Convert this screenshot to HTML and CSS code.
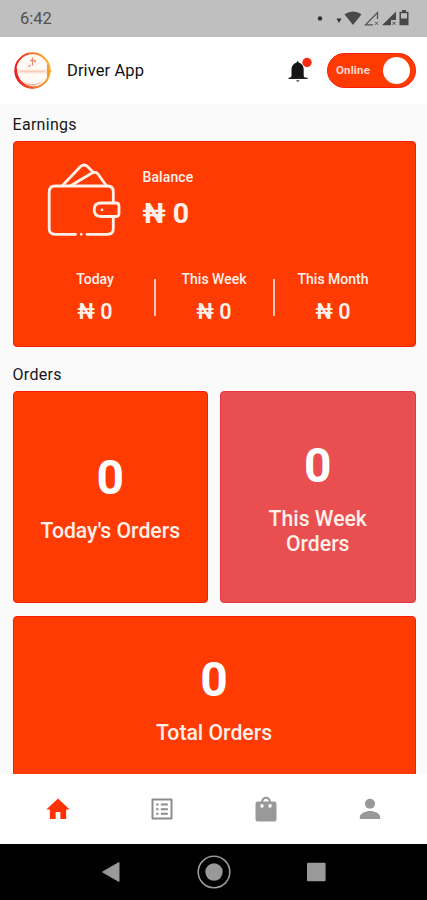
FILE: index.html
```html
<!DOCTYPE html>
<html lang="en">
<head>
<meta charset="utf-8">
<title>Driver App</title>
<link rel="stylesheet" href="styles.css">
</head>
<body>
<div class="status">
  <span class="clock">6:42</span>
  <svg class="status-icons" width="96" height="20" viewBox="0 0 96 20">
    <circle cx="5" cy="9.500" r="2.200" fill="#333"/>
    <path d="M21.500 9.500h5l-2.500 4.500z" fill="#333"/>
    <path d="M29.500 5.200q8.500-5.600 17 0L38 16z" fill="#484848"/>
    <path d="M62.500 10V3.500L50.500 15.800H58" fill="none" stroke="#555" stroke-width="1.300"/>
    <path d="M60 12.800l3 3m0-3l-3 3" stroke="#555" stroke-width="1"/>
    <path d="M81 2.500v8.500h-5v5.300H67z" fill="#484848"/>
    <path d="M77.500 12.800l3 3m0-3l-3 3" stroke="#484848" stroke-width="1"/>
    <path fill-rule="evenodd" d="M87 1h4v1.700h2.500v13.600h-9V2.700H87zM86 4.200v5.300h6V4.200z" fill="#484848"/>
  </svg>
</div>
<header class="header">
  <svg class="logo" width="40" height="40" viewBox="0 0 40 40">
    <defs>
      <linearGradient id="ring" x1="0" y1=".6" x2="1" y2=".4">
        <stop offset="0" stop-color="#e8161c"/><stop offset=".5" stop-color="#f4642c"/><stop offset="1" stop-color="#f9b52c"/>
      </linearGradient>
    </defs>
    <circle cx="20.500" cy="19.500" r="16.500" fill="#fffaf6"/>
    <path d="M5 20.500h31" stroke="#fce3d8" stroke-width="4"/>
    <circle cx="20.500" cy="19.500" r="17.200" fill="none" stroke="url(#ring)" stroke-width="2"/>
    <path d="M3 17c-1 10 5 19 15 20.500 6 .5 11-2 14-5-5 3-10 4-15 2C9 32 5 26 5 17z" fill="url(#ring)"/>
    <path d="M12 30.500c6 4 13 4 19-1.500-5 7-14 7-19 1.500z" fill="#f6a48c"/>
    <path d="M36.500 14l.5 5 3 1-2.500 1.500L36 28l-1 2.500V13z" fill="#f69a2c"/>
    <path d="M20.500 6.500v8M18 9.500h5l.5 2M18.500 14l-2 2" fill="none" stroke="#f08a74" stroke-width="1.300"/>
    <path d="M8 20.500h25" stroke="#f8cbb6" stroke-width="1"/>
  </svg>
  <h1 class="app-name">Driver App</h1>
  <svg class="bell" width="32" height="32" viewBox="0 0 32 32">
    <path d="M7.500 23.500c0-1 2-1 2-2.800v-6c0-4.200 2.400-6.200 5-7 0-2 2.200-2 2.200 0 3 .8 5 2.800 5 7v6c0 1.800 2 1.800 2 2.800z" fill="#151515"/>
    <path d="M6.500 23.300h19" stroke="#222" stroke-width="1.400"/>
    <path d="M14 25.200h3.600q-1.800 3.200-3.600 0z" fill="#444"/>
    <circle cx="25" cy="7.500" r="4.700" fill="#fb2c12"/>
  </svg>
  <div class="toggle"><span>Online</span><i class="knob"></i></div>
</header>
<main class="content">
  <h2 class="section">Earnings</h2>
  <section class="card earnings">
    <div class="balance">
      <svg class="wallet" width="74" height="76" viewBox="0 0 74 76" fill="none" stroke="#fff0ea" stroke-width="2.800" stroke-linecap="round" stroke-linejoin="round">
        <path d="M28.500 72.300H8q-5.800 0-5.800-5.800V30.300q0-6.300 5.800-6.300h52.500q5.800 0 5.800 6v11M66.300 55v11.500q0 5.800-5.800 5.800H40"/>
        <path d="M15.500 23.500L33.500 4.500q4-3 7 0l6 6M24 23.500l21-12.500q4-1.500 6 1l8.500 12"/>
        <path d="M54 41h15q3 0 3 3v7.500q0 3-3 3H54q-6.800 0-6.800-6.700Q47.200 41 54 41z"/>
        <path d="M55 47.800h.01M34.200 72.300h.01"/>
      </svg>
      <div>
        <div class="balance-label">Balance</div>
        <div class="balance-value">₦ 0</div>
      </div>
    </div>
    <div class="periods">
      <div class="period"><div class="label">Today</div><div class="amount">₦ 0</div></div>
      <div class="period"><div class="label">This Week</div><div class="amount">₦ 0</div></div>
      <div class="period"><div class="label">This Month</div><div class="amount">₦ 0</div></div>
    </div>
  </section>
  <h2 class="section orders-title">Orders</h2>
  <div class="orders">
    <section class="card tile"><strong>0</strong><span>Today's Orders</span></section>
    <section class="card tile rose"><strong>0</strong><span>This Week<br>Orders</span></section>
    <section class="card tile total"><strong>0</strong><span>Total Orders</span></section>
  </div>
</main>
<nav class="tabs">
  <svg width="28" height="28" viewBox="0 0 24 24" fill="#fd3206"><path d="M10 20.500v-6h4v6h5v-8h3L12 3 2 12.500h3v8z"/></svg>
  <svg width="28" height="28" viewBox="0 0 24 24" fill="#8c8c8c"><path d="M19.300 4.700v14.600H4.700V4.700h14.600m.8-1.700H3.900c-.5 0-.9.400-.9.900v16.200c0 .4.400.9.900.9h16.200c.4 0 .9-.5.900-.9V3.900c0-.5-.5-.9-.9-.9zM11 7.300h6V9h-6zm0 4h6V13h-6zm0 4h6V17h-6zM7 7.300h2V9H7zm0 4h2V13H7zm0 4h2V17H7z"/></svg>
  <svg width="28" height="28" viewBox="0 0 24 24" fill="#999"><path fill-rule="evenodd" d="M5 5.500h2.700C8.200 3 9.800 1.500 12 1.500S15.800 3 16.300 5.500H19q2 0 2 2V21q0 1.700-1.700 1.700H4.700Q3 22.700 3 21V7.500q0-2 2-2zm4.600 0h4.800C14 4 13.200 3.200 12 3.200S10 4 9.600 5.500zM7.300 8v2.800h2.500V8zm6.900 0v2.800h2.500V8z"/></svg>
  <svg width="28" height="28" viewBox="0 0 24 24" fill="#999"><circle cx="12" cy="7.500" r="4.300"/><path d="M3.300 20.500v-1.800c0-3 5-5 8.700-5s8.700 2 8.700 5v1.800z"/></svg>
</nav>
<footer class="system">
  <svg width="20" height="22" viewBox="0 0 20 22"><path d="M1.500 11L18 1.500v19z" fill="#999" stroke="#999" stroke-linejoin="round"/></svg>
  <svg width="34" height="34" viewBox="0 0 34 34"><circle cx="17" cy="17" r="15.800" fill="none" stroke="#999" stroke-width="1.600"/><circle cx="17" cy="17" r="8.700" fill="#999"/></svg>
  <svg width="20" height="20" viewBox="0 0 20 20"><rect x="0" y=".7" width="18.600" height="18.600" rx="1" fill="#999"/></svg>
</footer>
</body>
</html>
```
FILE: styles.css
```css
* { box-sizing: border-box; }
body {
  margin: 0;
  width: 427px;
  height: 900px;
  overflow: hidden;
  display: flex;
  flex-direction: column;
  background: #fafafa;
  font-family: Roboto, "Liberation Sans", sans-serif;
}
svg { display: block; flex: none; }
h1, h2 { margin: 0; font-weight: 400; }

.status {
  flex: none;
  height: 37px;
  padding: 0 16px 0 20px;
  display: flex;
  align-items: center;
  justify-content: space-between;
  background: #bfbfbf;
  color: #505050;
}
.clock { font-size: 16.5px; }

.header {
  flex: none;
  height: 67px;
  padding: 0 11px 0 13px;
  display: flex;
  align-items: center;
  background: #fff;
}
.app-name { margin-left: 14px; font-size: 16.5px; letter-spacing: 0.1px; color: #111; }
.bell { margin-left: auto; }
.toggle {
  width: 89px;
  height: 35px;
  margin-left: 13px;
  padding: 0 5px 0 8px;
  display: flex;
  align-items: center;
  justify-content: space-between;
  border: 1px solid #fb1e08;
  border-radius: 18px;
  background: #ff3b04;
  color: #ffd9ce;
  font-size: 11.5px;
  font-weight: 700;
}
.toggle span { margin-top: -2px; letter-spacing: 0.15px; }
.knob { width: 27px; height: 27px; border-radius: 50%; background: #fff; }
.logo { margin: 0 1px 0 -1px; }

.content { flex: 1; min-height: 0; overflow: hidden; padding: 0 11.5px 0 12.5px; }
.section { height: 37px; padding-top: 11px; font-size: 16px; line-height: 20px; letter-spacing: 0.3px; color: #181818; }
.orders-title { height: 44px; padding-top: 18px; }

.card { border: 1px solid #fa1a08; border-radius: 4px; background: #ff3b04; color: #fff0ea; }
.earnings { height: 206px; padding-top: 20px; }
.balance { display: flex; padding-left: 33px; }
.balance-label { margin: 5px 0 0 22px; font-size: 14px; line-height: 20px; font-weight: 500; letter-spacing: 0.1px; }
.balance-value { margin: 10px 0 0 22px; font-size: 28.5px; line-height: 34px; font-weight: 700; }
.periods { display: flex; justify-content: center; margin-top: 29px; }
.period { position: relative; width: 119px; height: 66px; text-align: center; }
.period + .period::before {
  content: "";
  position: absolute;
  left: -1px;
  top: 12px;
  width: 2px;
  height: 37px;
  background: #ffc4b4;
}
.label { font-size: 14px; line-height: 24px; font-weight: 500; }
.amount { margin-top: 7px; font-size: 21.5px; line-height: 28px; font-weight: 600; }

.orders { display: grid; grid-template-columns: 1fr 1fr; gap: 12.5px 12px; }
.tile {
  height: 212px;
  display: flex;
  flex-direction: column;
  align-items: center;
  justify-content: center;
  text-align: center;
}
.rose { background: #e94e50; border-color: #e53843; }
.total { grid-column: 1 / 3; height: 190px; justify-content: flex-start; padding-top: 35px; }
.tile strong { font-size: 48px; line-height: 56px; font-weight: 700; color: #fff; }
.tile span { margin: 12px 0 1px; font-size: 21.2px; line-height: 25px; font-weight: 500; }

.tabs {
  flex: none;
  height: 70px;
  padding: 0 5.5px 0 6.5px;
  display: flex;
  justify-content: space-around;
  align-items: center;
  background: #fff;
}
.system {
  flex: none;
  height: 56px;
  display: flex;
  justify-content: center;
  align-items: center;
  gap: 76px;
  background: #000;
}
```
